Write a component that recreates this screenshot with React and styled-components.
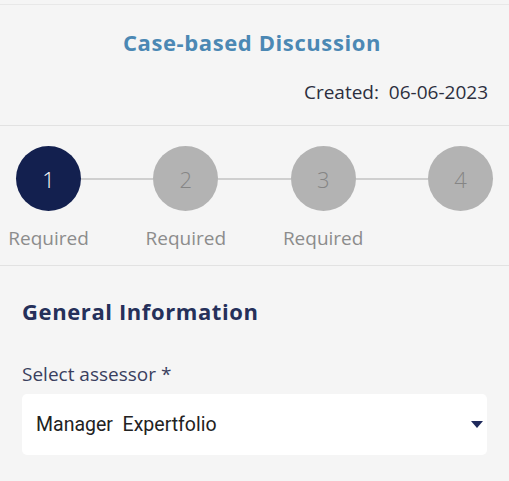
import React from 'react';
import styled, { createGlobalStyle } from 'styled-components';

const GlobalStyle = createGlobalStyle`
  html, body {
    margin: 0;
    padding: 0;
    background: #f5f5f5;
    font-family: "Open Sans", "Noto Sans", sans-serif;
  }
`;

const Page = styled.div`
  width: 509px;
  height: 481px;
  background: #f5f5f5;
  overflow: hidden;
  padding-top: 4px;
  box-sizing: border-box;
`;

const Header = styled.header`
  border-top: 1px solid #e8e8e8;
  border-bottom: 1px solid #e2e2e2;
  display: flex;
  flex-direction: column;
  padding: 0 21px 0 16px;
  height: 122px;
  box-sizing: border-box;
`;

const Title = styled.h1`
  margin: 23px 0 0;
  font-size: 22px;
  font-weight: 700;
  letter-spacing: 0.6px;
  color: #4b88b4;
  text-align: center;
  line-height: 28px;
`;

const Created = styled.div`
  margin-top: 23px;
  align-self: flex-end;
  font-size: 19px;
  color: #2c2f3e;
  line-height: 26px;
  white-space: pre;
`;

const Stepper = styled.div`
  display: flex;
  align-items: flex-start;
  padding: 20px 16px 0;
  height: 140px;
  box-sizing: border-box;
  border-bottom: 1px solid #e2e2e2;
`;

const Step = styled.div`
  width: 65px;
  display: flex;
  flex-direction: column;
  align-items: center;
  flex-shrink: 0;
`;

const Circle = styled.div`
  width: 65px;
  height: 65px;
  border-radius: 50%;
  background: ${p => (p.$active ? '#13204f' : '#b3b3b3')};
  color: ${p => (p.$active ? '#ffffff' : '#858585')};
  display: flex;
  align-items: center;
  justify-content: center;
  font-size: 22px;
  font-weight: 300;
`;

const StepLabel = styled.div`
  margin-top: 14px;
  font-size: 19px;
  line-height: 26px;
  color: #8c8c8c;
  white-space: nowrap;
  min-height: 26px;
`;

const Connector = styled.div`
  flex: 1;
  height: 2px;
  background: #cfcfcf;
  margin-top: 32px;
`;

const Section = styled.section`
  padding: 30px 22px 0;
`;

const SectionTitle = styled.h2`
  margin: 0;
  font-size: 22px;
  font-weight: 700;
  letter-spacing: 0.6px;
  color: #25305a;
  line-height: 30px;
`;

const FieldLabel = styled.label`
  display: block;
  margin-top: 35px;
  font-size: 19px;
  line-height: 26px;
  color: #3a3f5e;
`;

const Select = styled.div`
  margin-top: 7px;
  height: 61px;
  background: #ffffff;
  border-radius: 5px;
  display: flex;
  align-items: center;
  justify-content: space-between;
  padding: 0 4px 0 14px;
  box-sizing: border-box;
`;

const SelectValue = styled.span`
  font-family: Roboto, "Noto Sans", sans-serif;
  font-size: 19.5px;
  color: #222222;
  white-space: pre;
`;

const Caret = styled.svg`
  width: 12px;
  height: 7px;
`;

const steps = [
  { n: 1, label: 'Required', active: true },
  { n: 2, label: 'Required' },
  { n: 3, label: 'Required' },
  { n: 4, label: '' },
];

export default function App() {
  return (
    <>
      <GlobalStyle />
      <Page>
        <Header>
          <Title>Case-based Discussion</Title>
          <Created>{'Created:  06-06-2023'}</Created>
        </Header>
        <Stepper>
          {steps.map((s, i) => (
            <React.Fragment key={s.n}>
              {i > 0 && <Connector />}
              <Step>
                <Circle $active={s.active}>{s.n}</Circle>
                <StepLabel>{s.label}</StepLabel>
              </Step>
            </React.Fragment>
          ))}
        </Stepper>
        <Section>
          <SectionTitle>General Information</SectionTitle>
          <FieldLabel>Select assessor *</FieldLabel>
          <Select>
            <SelectValue>{'Manager  Expertfolio'}</SelectValue>
            <Caret viewBox="0 0 12 7">
              <path d="M0 0 L12 0 L6 7 Z" fill="#1f2a5c" />
            </Caret>
          </Select>
        </Section>
      </Page>
    </>
  );
}
